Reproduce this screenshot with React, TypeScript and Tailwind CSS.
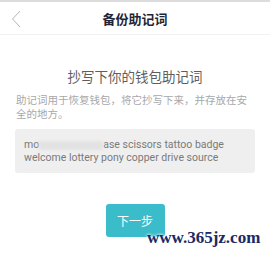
import React from "react";

export default function App() {
  const cjk = { fontFamily: '"Noto Sans CJK SC", "Noto Sans", sans-serif' };
  return (
    <div className="relative w-[270px] h-[253px] bg-white overflow-hidden" style={cjk}>
      <div className="h-[2px] bg-[#dcdcdc]" />
      <div className="relative h-[33px] flex items-center justify-center border-b border-[#f2f2f2]">
        <svg className="absolute left-[11px] top-[8px]" width="10" height="18" viewBox="0 0 10 18">
          <path d="M9 1 L1.5 9 L9 17" fill="none" stroke="#b5b5b5" strokeWidth="1" />
        </svg>
        <span className="text-[13px] leading-none font-bold text-[#1f2535]">备份助记词</span>
      </div>
      <div className="px-[16px]">
        <div className="mt-[32px] text-center text-[13.5px] leading-[18px] text-[#5e5e5e]">抄写下你的钱包助记词</div>
        <div className="mt-[8px] text-[10.5px] leading-[13.5px] text-[#a8a8a8]">
          助记词用于恢复钱包，将它抄写下来，并存放在安全的地方。
        </div>
      </div>
      <div className="mx-[15px] mt-[9px] h-[44px] rounded-[3px] bg-[#efefef] px-[9px] pt-[9px]">
        <div
          className="text-[10.5px] leading-[13px] text-[#7a7a7a]"
          style={{ fontFamily: 'Roboto, "Liberation Sans", sans-serif' }}
        >
          mo
          <span className="inline-block align-middle w-[64px] h-[9px] bg-[#e2e2e2] blur-[1.5px]" />
          ase scissors tattoo badge welcome lottery pony copper drive source
        </div>
      </div>
      <div className="flex justify-center mt-[31px]">
        <div className="w-[59px] h-[33px] rounded-[3px] bg-[#3bbccb] flex items-center justify-center text-white text-[12px]">
          下一步
        </div>
      </div>
      <div
        className="absolute left-[147px] top-[229px] text-[17px] font-bold leading-none text-[#1b2a66]"
        style={{ fontFamily: '"Liberation Serif", serif', textShadow: "0 0 3px #fff, 0 0 3px #fff" }}
      >
        www.365jz.com
      </div>
    </div>
  );
}
